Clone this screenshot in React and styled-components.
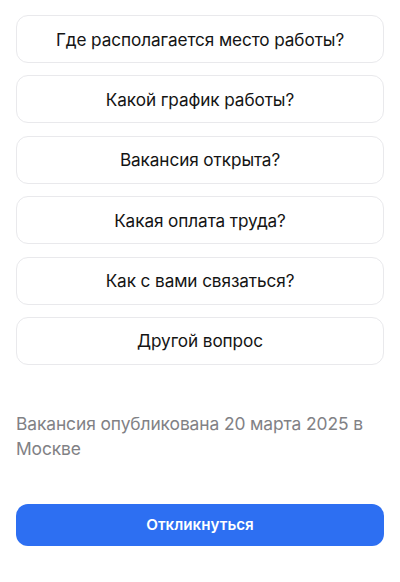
import React from "react";
import styled, { createGlobalStyle } from "styled-components";

const Global = createGlobalStyle`
  html, body { margin: 0; padding: 0; background: #ffffff; }
  body { font-family: Inter, "Noto Sans", sans-serif; -webkit-font-smoothing: antialiased; }
`;

const Page = styled.div`
  width: 400px;
  box-sizing: border-box;
  padding: 15px 16px 0 16px;
  display: flex;
  flex-direction: column;
`;

const List = styled.div`
  display: flex;
  flex-direction: column;
  gap: 12.4px;
`;

const Option = styled.button`
  height: 48px;
  box-sizing: border-box;
  width: 100%;
  border: 1px solid #e9e9ec;
  border-radius: 12px;
  background: #ffffff;
  display: flex;
  align-items: center;
  justify-content: center;
  font-family: inherit;
  font-size: 17.2px;
  color: #141414;
  padding: 0;
  letter-spacing: -0.1px;
`;

const Note = styled.p`
  margin: 46px 0 0 0;
  font-size: 17.4px;
  line-height: 25px;
  color: #818185;
  letter-spacing: -0.1px;
`;

const Primary = styled.button`
  margin-top: 43px;
  height: 42px;
  width: 100%;
  border: none;
  border-radius: 12px;
  background: #2d6ff2;
  color: #ffffff;
  font-family: inherit;
  font-size: 15.2px;
  font-weight: 600;
`;

const questions = [
  "Где располагается место работы?",
  "Какой график работы?",
  "Вакансия открыта?",
  "Какая оплата труда?",
  "Как с вами связаться?",
  "Другой вопрос",
];

export default function App() {
  return (
    <>
      <Global />
      <Page>
        <List>
          {questions.map((q) => (
            <Option key={q}>{q}</Option>
          ))}
        </List>
        <Note>Вакансия опубликована 20 марта 2025 в Москве</Note>
        <Primary>Откликнуться</Primary>
      </Page>
    </>
  );
}
